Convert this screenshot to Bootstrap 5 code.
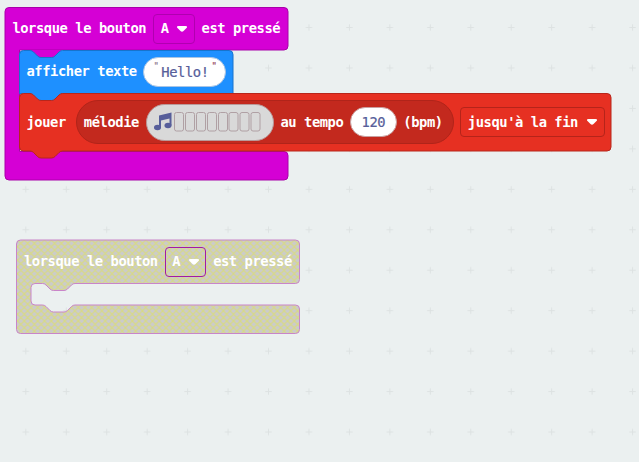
<!DOCTYPE html>
<html lang="fr">
<head>
<meta charset="utf-8">
<meta name="viewport" content="width=device-width, initial-scale=1">
<title>Blocs</title>
<link href="https://cdn.jsdelivr.net/npm/bootstrap@5.3.0/dist/css/bootstrap.min.css" rel="stylesheet">
<style>
body{background:#ebf0f0;font:700 13.8px/16px "DejaVu Sans Mono",monospace;letter-spacing:-.44px;color:#fff}
.workspace{width:639px;height:462px}
.stack{width:609px}
.stack-a{left:4px;top:7px}
.stack-b{left:16px;top:240px}
.shape{left:0;top:0;overflow:visible}
.blk{position:relative;white-space:pre}
.head{height:43px;padding-left:8.400px}
.head span,.show>span{padding-bottom:1.500px}
.stack-b .head{padding-left:8px}
.inner-blk{margin-left:15px;padding-left:7.500px}
.show{height:43.5px}
.play{height:57.5px}
.field{height:30px;border:1px solid #b000b0;border-radius:4px;padding:0 7px}
.head .field{width:41.400px;margin:0 7px;padding:0 6.500px}
.stack-b .field{border-color:#a31ba3}
.play .field{width:145px;border-color:#b5241a;margin-left:6px}
.oval{background:#fff;color:#575e9a;border-radius:15px;height:30px;-webkit-text-stroke:.2px #575e9a;font-weight:400}
.hello{width:83px;margin-left:6.800px;border:1px solid #a9c4e4;position:relative}
.quote{position:absolute;top:1px;font-size:9px;line-height:14px}
.quote-open{left:9px;color:#a88}
.quote-close{right:9px;color:#b33}
.melody{height:44px;width:377.500px;border-radius:22px;background:#c3291e;border:1px solid #b0241a;margin-left:10.500px;padding-left:6.500px}
.tune{width:127.500px;height:37px;border-radius:19px;background:#d9d9d9;border:1px solid #b99a9a;margin-left:7.500px;margin-right:6.500px;padding-left:7px}
.tempo{width:47px;border:1px solid #c9a0a0;margin:0 6.500px 0 6.500px}
</style>
</head>
<body>
<main class="workspace position-relative overflow-hidden">
<svg class="position-absolute shape" width="639" height="462">
<defs>
<pattern id="grid" width="40.45" height="40.45" patternUnits="userSpaceOnUse" x="5.6" y="7.3"><path d="M17 20.2h6.400M20.200 17v6.400" stroke="#dde2e2" stroke-width="1"/></pattern>
<pattern id="hatch" width="27" height="27" patternUnits="userSpaceOnUse" x="1"><path d="M0 0h27v27H0z" fill="#cbcbcb"/><g stroke="#d8da84" stroke-width="1.2"><path d="M-1-1L28 28M5.750-1L34.750 28M12.500-1L41.500 28M19.250-1L48.250 28M26-1L55 28M-7.750-1L21.250 28M-14.500-1L14.500 28M-21.250-1L7.750 28M-28-1L1 28"/><path d="M28-1L-1 28M21.250-1L-7.750 28M14.500-1L-14.500 28M7.750-1L-21.250 28M1-1L-28 28M34.750-1L5.750 28M41.500-1L12.500 28M48.250-1L19.250 28M55-1L26 28"/></g></pattern>
</defs>
<rect width="639" height="462" fill="url(#grid)"/>
</svg>

<section class="stack stack-a position-absolute">
<svg class="position-absolute shape" width="609" height="174" stroke-linejoin="round">
<path d="M5 .500H280q4 0 4 4V39q0 4-4 4H15.500V144.500H280q4 0 4 4V169q0 4-4 4H5q-4 0-4-4V4.500q0-4 4-4z" fill="#d500d5" stroke="#aa00aa"/>
<path d="M27 43H57V52H27z" fill="#d500d5"/>
<path d="M19.500 43.500h6.500q2 0 3.500 1.500l4 4q1.500 1.500 3.500 1.500h10.500q2 0 3.500-1.500l4-4q1.500-1.500 3.500-1.500H225q4 0 4 4V86.500H15.500V47.500q0-4 4-4z" fill="#1e90ff" stroke="#1873cc"/>
<path d="M27 86H57V94H27z" fill="#1e90ff"/>
<path d="M19.500 86.500h6.500q2 0 3.500 1.500l4 4q1.500 1.500 3.500 1.500h10.500q2 0 3.500-1.500l4-4q1.500-1.500 3.500-1.500H603q4 0 4 4V140q0 4-4 4H58.500q-2 0-3.500 1.500l-4 4q-1.500 1.500-3.500 1.500h-10.500q-2 0-3.500-1.500l-4-4Q28 144 26 144H19.500q-4 0-4-4V90.500q0-4 4-4z" fill="#e63022" stroke="#b8261b"/>
</svg>
<div class="blk head d-flex align-items-center"><span>lorsque le bouton</span><div class="field d-flex align-items-center justify-content-between"><span>A</span><svg width="10" height="6"><path d="M1.500 0h7Q11 0 9.500 2L6.500 5Q5 6.500 3.500 5L.5 2Q-1 0 1.500 0" fill="#fff"/></svg></div><span>est pressé</span></div>
<div class="blk inner-blk show d-flex align-items-center"><span>afficher texte</span><div class="oval hello d-flex align-items-center justify-content-center"><span class="quote quote-open">"</span><span>Hello!</span><span class="quote quote-close">"</span></div></div>
<div class="blk inner-blk play d-flex align-items-center"><span>jouer</span>
<div class="melody d-flex align-items-center"><span>mélodie</span><div class="tune d-flex align-items-center">
<svg width="108" height="20"><g fill="#575e9a"><ellipse cx="3.500" cy="15.500" rx="3.500" ry="2.700"/><ellipse cx="14" cy="13.500" rx="3.500" ry="2.700"/><path d="M5 3.500L17.500 .500V13.500h-2V6.500L7 8.500V15.500H5z"/></g><g fill="none" stroke="#b0a0a4"><rect x="20.500" y=".500" width="9" height="18.500" rx="2"/><rect x="31.500" y=".500" width="9" height="18.500" rx="2"/><rect x="42.500" y=".500" width="9" height="18.500" rx="2"/><rect x="53.500" y=".500" width="9" height="18.500" rx="2"/><rect x="64.500" y=".500" width="9" height="18.500" rx="2"/><rect x="75" y=".500" width="9" height="18.500" rx="2"/><rect x="86" y=".500" width="9" height="18.500" rx="2"/><rect x="97" y=".500" width="9" height="18.500" rx="2"/></g></svg></div><span>au tempo</span><div class="oval tempo d-flex align-items-center justify-content-center">120</div><span>(bpm)</span></div>
<div class="field d-flex align-items-center justify-content-between"><span>jusqu'à la fin</span><svg width="10" height="6"><path d="M1.500 0h7Q11 0 9.500 2L6.500 5Q5 6.500 3.500 5L.5 2Q-1 0 1.500 0" fill="#fff"/></svg></div></div>
</section>

<section class="stack stack-b position-absolute">
<svg class="position-absolute shape" width="284" height="94" stroke-linejoin="round">
<path transform="translate(.5 0)" d="M4 0H279q4 0 4 4V39.500q0 4-4 4H58.500q-2 0-3.500 1.500l-4 4q-1.500 1.500-3.500 1.500h-10.500q-2 0-3.500-1.500l-4-4q-1.500-1.500-3.500-1.500H18.500q-4 0-4 4V61q0 4 4 4H26q2 0 3.500 1.500l4 4q1.500 1.500 3.500 1.500h10.500q2 0 3.500-1.500l4-4Q56.500 65 58.500 65H279q4 0 4 4V89.500q0 4-4 4H4q-4 0-4-4V4q0-4 4-4z" fill="url(#hatch)" stroke="#c985c9"/>
</svg>
<div class="blk head d-flex align-items-center"><span>lorsque le bouton</span><div class="field d-flex align-items-center justify-content-between"><span>A</span><svg width="10" height="6"><path d="M1.500 0h7Q11 0 9.500 2L6.500 5Q5 6.500 3.500 5L.5 2Q-1 0 1.500 0" fill="#fff"/></svg></div><span>est pressé</span></div>
</section>
</main>
<script src="https://cdn.jsdelivr.net/npm/bootstrap@5.3.0/dist/js/bootstrap.bundle.min.js"></script>
</body>
</html>
